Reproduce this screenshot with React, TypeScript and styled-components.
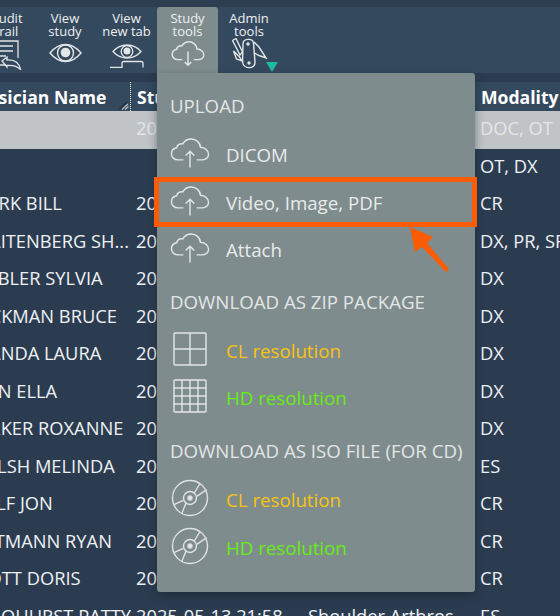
import React from 'react'
import styled, { createGlobalStyle } from 'styled-components'

const GlobalStyle = createGlobalStyle`
  html, body {
    margin: 0;
    padding: 0;
    background: #2c3c50;
    overflow: hidden;
    font-family: "Open Sans", "Noto Sans", sans-serif;
  }
`

const rows = [
  { name: '', date: '20', modality: 'DOC, OT', selected: true },
  { name: '', date: '', modality: 'OT, DX' },
  { name: 'CLARK BILL', date: '20', modality: 'CR' },
  { name: 'BRAITENBERG SH...', date: '20', modality: 'DX, PR, SR' },
  { name: 'STABLER SYLVIA', date: '20', modality: 'DX' },
  { name: 'HECKMAN BRUCE', date: '20', modality: 'DX' },
  { name: 'BRANDA LAURA', date: '20', modality: 'DX' },
  { name: 'SEAN ELLA', date: '20', modality: 'DX' },
  { name: 'BARKER ROXANNE', date: '20', modality: 'DX' },
  { name: 'WOLSH MELINDA', date: '20', modality: 'ES' },
  { name: 'WULF JON', date: '20', modality: 'CR' },
  { name: 'HEITMANN RYAN', date: '20', modality: 'CR' },
  { name: 'SCOTT DORIS', date: '20', modality: 'CR' },
  { name: 'SCHOHURST PATTY', date: '2025-05-13 21:58', desc: 'Shoulder Arthros...', modality: 'ES' },
]

const Cloud = ({ down, size = 40 }: { down?: boolean; size?: number }) => (
  <svg width={size} height={(size * 32) / 42} viewBox="0 0 42 32" fill="none" stroke="#e3e6e6" strokeWidth={down ? 1.8 : 1.5}>
    <path d="M14 23H8.500C4.500 23 1.500 20.200 1.500 16.600 1.500 13.400 3.800 10.800 7 10.200 7.600 7.200 10.400 5.400 13.400 6.200 15.200 3 18.600 1 22.200 1 27.400 1 31.600 4.800 32 9.800 36.800 10 40.500 13.200 40.500 17 40.500 20.400 37.600 23 34 23H28" />
    {down ? <path d="M21 13V30M17 26l4 4 4-4" /> : <path d="M21 31V14M16.500 18.500 21 14l4.500 4.500" />}
  </svg>
)

const Grid = ({ cells }: { cells: number }) => {
  const lines = []
  for (let i = 1; i < cells; i++) {
    const p = 1 + (i * 32) / cells
    lines.push(<path key={i} d={`M${p} 1V33M1 ${p}H33`} />)
  }
  return (
    <svg width="34" height="34" viewBox="0 0 34 34" fill="none" stroke="#e3e6e6" strokeWidth="1.4">
      <rect x="1" y="1" width="32" height="32" rx="1" />
      {lines}
    </svg>
  )
}

const Disc = () => (
  <svg width="38" height="38" viewBox="0 0 38 38" fill="none" stroke="#dfe2e2" strokeWidth="1.4">
    <circle cx="19" cy="19" r="17.500" />
    <circle cx="19" cy="19" r="6.500" />
    <circle cx="19" cy="19" r="2" fill="#e3e6e6" />
    <path d="M23.300 14 29 4.500M25.700 17.300 35.700 10.700M15 24 10.700 34.700M12.300 21.300 3 25.700" />
  </svg>
)

const Eye = () => (
  <svg width="33" height="20" viewBox="0 0 33 20" fill="none" stroke="#e3e6e6" strokeWidth="1.4">
    <path d="M1 10C6 4 11 1.500 16.500 1.500S27 4 32 10C27 16 22 18.500 16.500 18.500S6 16 1 10Z" />
    <circle cx="16.500" cy="10" r="8" />
    <circle cx="16.500" cy="9.500" r="4.800" fill="#e3e6e6" stroke="none" />
  </svg>
)

const EyeTab = () => (
  <svg width="34" height="24" viewBox="0 0 34 24" fill="none" stroke="#e3e6e6" strokeWidth="1.3">
    <path d="M3 7.500C7 3 12 1 17 1S27 3 31 7.500C27 12 22 14 17 14S7 12 3 7.500Z" />
    <circle cx="17" cy="7.500" r="5.800" />
    <circle cx="17" cy="7" r="3.500" fill="#e3e6e6" stroke="none" />
    <path d="M0 23.500H12V19Q12 17.500 14 17.500H31Q33 17.500 33 19V23.500" />
  </svg>
)

const AuditIcon = () => (
  <svg width="22" height="30" viewBox="0 0 22 30" fill="none" stroke="#e3e6e6" strokeWidth="1.3">
    <path d="M0 1H18V18M0 6H13M0 11H13M0 16H6M0 25H6" />
    <path d="M2 21 7 17V20C14 19.500 19 22 20.500 29.500 17 26 12 25 7 25.500V27Z" />
  </svg>
)

const KnifeIcon = () => (
  <svg width="46" height="31" viewBox="0 0 46 31" fill="none" stroke="#e3e6e6" strokeWidth="1.4">
    <path d="M11 6C11 0 21 0 21.500 5L23 24C23.500 31.500 11.500 31.500 10.500 24Z" />
    <path d="M0.500 2.500 4 0.500 10.500 14 8 17ZM1.500 13 7.500 19 10 23 4.500 21ZM22 4 27 9 34 20 27 17.500 22.500 15" />
    <circle cx="16" cy="6" r="1" fill="#e3e6e6" />
    <circle cx="17" cy="25" r="1" fill="#e3e6e6" />
  </svg>
)

const GripIcon = () => (
  <svg width="10" height="9" viewBox="0 0 10 9" fill="none" strokeWidth="1.2">
    <path d="M0.500 8.500 8 1" stroke="#1f2c3a" />
    <path d="M3 8.500 9 3" stroke="#b9bfc5" />
    <path d="M6 8.500 9.500 5.500" stroke="#b9bfc5" />
  </svg>
)

export default function App() {
  return (
    <Page>
      <GlobalStyle />
      <TopStrip />
      <Toolbar>
        <ToolButton $width={55}>
          <ToolLabel>Audit trail</ToolLabel>
          <AuditSlot><AuditIcon /></AuditSlot>
        </ToolButton>
        <ToolButton $width={62}>
          <ToolLabel>View study</ToolLabel>
          <EyeSlot><Eye /></EyeSlot>
        </ToolButton>
        <ToolButton $width={61}>
          <ToolLabel>View new tab</ToolLabel>
          <EyeTabSlot><EyeTab /></EyeTabSlot>
        </ToolButton>
        <ToolButton $width={61} $open>
          <ToolLabel>Study tools</ToolLabel>
          <CloudSlot><Cloud down size={34} /></CloudSlot>
        </ToolButton>
        <ToolButton $width={62}>
          <ToolLabel>Admin tools</ToolLabel>
          <AdminIcon>
            <KnifeIcon />
            <Caret />
          </AdminIcon>
        </ToolButton>
      </Toolbar>
      <Table>
        <HeaderRow>
          <HeaderCell>Physician Name<Grip><GripIcon /></Grip></HeaderCell>
          <HeaderCell>Study Date</HeaderCell>
          <HeaderCell>Description</HeaderCell>
          <HeaderCell>Modality</HeaderCell>
        </HeaderRow>
        {rows.map((row, i) => (
          <Row key={i} $selected={row.selected}>
            <NameCell>{row.name}</NameCell>
            <Cell>{row.date}</Cell>
            <Cell>{row.desc}</Cell>
            <Cell>{row.modality}</Cell>
          </Row>
        ))}
      </Table>
      <Menu>
        <SectionTitle>UPLOAD</SectionTitle>
        <MenuItem><IconCell><Cloud /></IconCell>DICOM</MenuItem>
        <MenuItem><IconCell><Cloud /></IconCell>Video, Image, PDF</MenuItem>
        <MenuItem><IconCell><Cloud /></IconCell>Attach</MenuItem>
        <SectionTitle $gap={1}>DOWNLOAD AS ZIP PACKAGE</SectionTitle>
        <MenuItem $color="#f8c40e"><IconCell><Grid cells={2} /></IconCell>CL resolution</MenuItem>
        <MenuItem $color="#66ee11"><IconCell><Grid cells={4} /></IconCell>HD resolution</MenuItem>
        <SectionTitle $gap={2.5}>DOWNLOAD AS ISO FILE (FOR CD)</SectionTitle>
        <MenuItem $color="#f8c40e"><IconCell><Disc /></IconCell>CL resolution</MenuItem>
        <MenuItem $color="#66ee11"><IconCell><Disc /></IconCell>HD resolution</MenuItem>
      </Menu>
      <Highlight />
      <Arrow width="46" height="47" viewBox="0 0 46 47">
        <path d="M2 1 25 11 19 17 41 43 38 46 14 21 7 26Z" fill="#fb5c04" />
      </Arrow>
    </Page>
  )
}

const Page = styled.div`
  position: relative;
  width: 560px;
  height: 616px;
  overflow: hidden;
  background: #2c3c50;
`
const TopStrip = styled.div`
  height: 7px;
  background: #2e3e51;
`
const Toolbar = styled.div`
  display: flex;
  height: 66px;
  margin-left: -21px;
  background: #34495e;
`
const ToolButton = styled.div<{ $width: number; $open?: boolean }>`
  display: flex;
  flex-direction: column;
  align-items: center;
  flex: none;
  box-sizing: border-box;
  width: ${(p) => p.$width}px;
  padding-top: 5px;
  color: #eef0f1;
  border-radius: 3px 3px 0 0;
  background: ${(p) => (p.$open ? '#7f8c8d' : 'transparent')};
`
const ToolLabel = styled.div`
  width: 56px;
  height: 25px;
  margin-bottom: 1px;
  font-size: 13px;
  line-height: 12.5px;
  text-align: center;
`
const AuditSlot = styled.div`
  margin: 2px 0 0 8px;
`
const EyeSlot = styled.div`
  margin-top: 5px;
`
const EyeTabSlot = styled.div`
  margin-top: 6px;
`
const CloudSlot = styled.div`
  margin-top: 3px;
`
const AdminIcon = styled.div`
  position: relative;
  margin-left: 12px;
`
const Caret = styled.div`
  position: absolute;
  right: 0;
  bottom: 2px;
  width: 0;
  height: 0;
  border-left: 6.500px solid transparent;
  border-right: 6.500px solid transparent;
  border-top: 10px solid #1abc9c;
`
const Table = styled.div`
  margin-top: 9px;
  margin-left: -34px;
`
const columns = '165px 172px 172px 1fr'
const HeaderRow = styled.div`
  display: grid;
  grid-template-columns: ${columns};
  height: 29px;
  background: #34495e;
  color: #ffffff;
  font-size: 17.6px;
  font-weight: 700;
  line-height: 31px;
`
const HeaderCell = styled.div`
  position: relative;
  box-sizing: border-box;
  padding-left: 6px;
  white-space: nowrap;
  overflow: hidden;
  &:first-child {
    padding-left: 0;
    border-right: 1px dotted #ffffff;
  }
`
const Grip = styled.span`
  position: absolute;
  right: 1px;
  bottom: 1px;
  display: flex;
`
const Row = styled.div<{ $selected?: boolean }>`
  display: grid;
  grid-template-columns: ${columns};
  height: 37.5px;
  line-height: 34px;
  font-size: 18.3px;
  white-space: nowrap;
  color: ${(p) => (p.$selected ? '#e4e6e8' : '#eef1f4')};
  background: ${(p) => (p.$selected ? '#c0c4c7' : 'transparent')};
`
const Cell = styled.div`
  padding-left: 5px;
  overflow: hidden;
`
const NameCell = styled.div`
  overflow: hidden;
`
const Menu = styled.div`
  position: absolute;
  left: 157px;
  top: 73px;
  box-sizing: border-box;
  width: 318px;
  height: 519px;
  padding-top: 7px;
  border-radius: 0 3px 3px 3px;
  background: #7f8c8d;
  box-shadow: 0 4px 10px rgba(20, 30, 40, 0.45);
`
const SectionTitle = styled.div<{ $gap?: number }>`
  height: 52px;
  margin-top: ${(p) => p.$gap ?? 0}px;
  padding-left: 13px;
  color: #e3e6e6;
  font-size: 18.7px;
  line-height: 52px;
`
const MenuItem = styled.div<{ $color?: string }>`
  display: flex;
  align-items: center;
  box-sizing: border-box;
  height: 47.5px;
  padding-bottom: 2px;
  color: ${(p) => p.$color ?? '#e8ebeb'};
  font-size: 18.7px;
`
const IconCell = styled.div`
  display: flex;
  justify-content: center;
  width: 66px;
  margin: 0 3px 3px 0;
`
const Highlight = styled.div`
  position: absolute;
  left: 154px;
  top: 177px;
  box-sizing: border-box;
  width: 323px;
  height: 50px;
  border: 5px solid #fb5c04;
`
const Arrow = styled.svg`
  position: absolute;
  left: 408px;
  top: 226px;
`
